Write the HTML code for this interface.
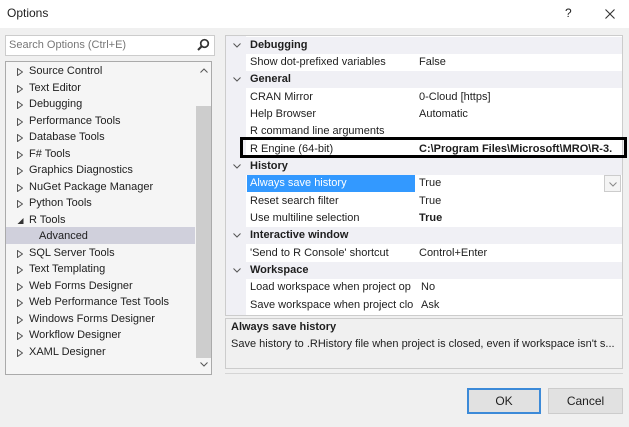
<!DOCTYPE html>
<html><head><style>
*{margin:0;padding:0;box-sizing:border-box}
body{width:629px;height:427px;background:#f0f0f0;font-family:"Liberation Sans",sans-serif;font-size:11px;color:#1e1e1e;position:relative;overflow:hidden}
.a{position:absolute;white-space:nowrap}
.title{left:0;top:0;width:629px;height:28px;background:#fff}
.tree div.i{position:absolute;left:11px;height:17px;line-height:17px}
.tri{display:inline-block;width:12px;height:17px;vertical-align:top;position:relative}
.tri svg{position:absolute;left:0;top:5px}
.row{position:absolute;left:0;width:397px;height:17px;line-height:17px}
.cat{background:#f0f0f5;font-weight:bold}
.row .n{position:absolute;left:24px}
.row .v{position:absolute;left:193px}
.chev{position:absolute;left:7px;top:6px}
</style></head><body>
<div class="a title"></div>
<div class="a" style="left:7px;top:6px;font-size:12px">Options</div>
<div class="a" style="left:565px;top:6px;font-size:12px">?</div>
<svg class="a" style="left:605px;top:9px" width="10" height="10"><path d="M0.5 0.5L9.5 9.5M9.5 0.5L0.5 9.5" stroke="#333" stroke-width="1.1"/></svg>

<div class="a" style="left:5px;top:35px;width:210px;height:21px;background:#fff;border:1px solid #ccc"></div>
<div class="a" style="left:9px;top:39px;color:#777">Search Options (Ctrl+E)</div>
<svg class="a" style="left:196px;top:38px" width="14" height="14"><circle cx="8.5" cy="5.5" r="3.8" fill="none" stroke="#333" stroke-width="1.7"/><line x1="6" y1="8" x2="2" y2="12" stroke="#333" stroke-width="2"/></svg>

<div class="a tree" style="left:5px;top:61px;width:207px;height:314px;border:1px solid #aaa;background:#f5f5f5">
<div class="a" style="left:190px;top:44px;width:15px;height:252px;background:#cdcdcd"></div>
<svg class="a" style="left:194px;top:6px" width="8" height="5"><path d="M0.5 4.5L4 1L7.5 4.5" fill="none" stroke="#555"/></svg>
<svg class="a" style="left:194px;top:300px" width="8" height="5"><path d="M0.5 0.5L4 4L7.5 0.5" fill="none" stroke="#555"/></svg>
<div class="a" style="left:0;top:165px;width:189px;height:17px;background:#d0d0dc"></div>
<div class="i" style="top:1px"><span class="tri"><svg width="6" height="8"><path d="M0.5 0.5L5.5 4L0.5 7.5Z" fill="none" stroke="#555"/></svg></span>Source Control</div>
<div class="i" style="top:17.5px"><span class="tri"><svg width="6" height="8"><path d="M0.5 0.5L5.5 4L0.5 7.5Z" fill="none" stroke="#555"/></svg></span>Text Editor</div>
<div class="i" style="top:34px"><span class="tri"><svg width="6" height="8"><path d="M0.5 0.5L5.5 4L0.5 7.5Z" fill="none" stroke="#555"/></svg></span>Debugging</div>
<div class="i" style="top:50.5px"><span class="tri"><svg width="6" height="8"><path d="M0.5 0.5L5.5 4L0.5 7.5Z" fill="none" stroke="#555"/></svg></span>Performance Tools</div>
<div class="i" style="top:67px"><span class="tri"><svg width="6" height="8"><path d="M0.5 0.5L5.5 4L0.5 7.5Z" fill="none" stroke="#555"/></svg></span>Database Tools</div>
<div class="i" style="top:83.5px"><span class="tri"><svg width="6" height="8"><path d="M0.5 0.5L5.5 4L0.5 7.5Z" fill="none" stroke="#555"/></svg></span>F# Tools</div>
<div class="i" style="top:100px"><span class="tri"><svg width="6" height="8"><path d="M0.5 0.5L5.5 4L0.5 7.5Z" fill="none" stroke="#555"/></svg></span>Graphics Diagnostics</div>
<div class="i" style="top:116.5px"><span class="tri"><svg width="6" height="8"><path d="M0.5 0.5L5.5 4L0.5 7.5Z" fill="none" stroke="#555"/></svg></span>NuGet Package Manager</div>
<div class="i" style="top:133px"><span class="tri"><svg width="6" height="8"><path d="M0.5 0.5L5.5 4L0.5 7.5Z" fill="none" stroke="#555"/></svg></span>Python Tools</div>
<div class="i" style="top:149.5px"><span class="tri"><svg width="7" height="8"><path d="M6.5 1L6.5 7L0.5 7Z" fill="#333"/></svg></span>R Tools</div>
<div class="i" style="top:166px;left:33px">Advanced</div>
<div class="i" style="top:182.5px"><span class="tri"><svg width="6" height="8"><path d="M0.5 0.5L5.5 4L0.5 7.5Z" fill="none" stroke="#555"/></svg></span>SQL Server Tools</div>
<div class="i" style="top:199px"><span class="tri"><svg width="6" height="8"><path d="M0.5 0.5L5.5 4L0.5 7.5Z" fill="none" stroke="#555"/></svg></span>Text Templating</div>
<div class="i" style="top:215.5px"><span class="tri"><svg width="6" height="8"><path d="M0.5 0.5L5.5 4L0.5 7.5Z" fill="none" stroke="#555"/></svg></span>Web Forms Designer</div>
<div class="i" style="top:232px"><span class="tri"><svg width="6" height="8"><path d="M0.5 0.5L5.5 4L0.5 7.5Z" fill="none" stroke="#555"/></svg></span>Web Performance Test Tools</div>
<div class="i" style="top:248.5px"><span class="tri"><svg width="6" height="8"><path d="M0.5 0.5L5.5 4L0.5 7.5Z" fill="none" stroke="#555"/></svg></span>Windows Forms Designer</div>
<div class="i" style="top:265px"><span class="tri"><svg width="6" height="8"><path d="M0.5 0.5L5.5 4L0.5 7.5Z" fill="none" stroke="#555"/></svg></span>Workflow Designer</div>
<div class="i" style="top:281.5px"><span class="tri"><svg width="6" height="8"><path d="M0.5 0.5L5.5 4L0.5 7.5Z" fill="none" stroke="#555"/></svg></span>XAML Designer</div>
</div>

<div class="a" style="left:225px;top:35px;width:398px;height:281px;background:#fff;border:1px solid #ccc;overflow:hidden">
<div class="a" style="left:0;top:0;width:20px;height:281px;background:#f0f0f5"></div>
<div class="row cat" style="top:1px"><svg class="chev" width="8" height="5"><path d="M0.5 0.5L4 4L7.5 0.5" fill="none" stroke="#555"/></svg><span class="n">Debugging</span></div>
<div class="row" style="top:18px"><span class="n">Show dot-prefixed variables</span><span class="v">False</span></div>
<div class="row cat" style="top:35px"><svg class="chev" width="8" height="5"><path d="M0.5 0.5L4 4L7.5 0.5" fill="none" stroke="#555"/></svg><span class="n">General</span></div>
<div class="row" style="top:52.5px"><span class="n">CRAN Mirror</span><span class="v">0-Cloud [https]</span></div>
<div class="row" style="top:70px"><span class="n">Help Browser</span><span class="v">Automatic</span></div>
<div class="row" style="top:87px"><span class="n">R command line arguments</span></div>
<div class="row" style="top:104.5px"><span class="n">R Engine (64-bit)</span><span class="v" style="font-weight:bold">C:\Program Files\Microsoft\MRO\R-3.</span></div>
<div class="row cat" style="top:122px"><svg class="chev" width="8" height="5"><path d="M0.5 0.5L4 4L7.5 0.5" fill="none" stroke="#555"/></svg><span class="n">History</span></div>
<div class="a" style="left:21px;top:139px;width:168px;height:17px;background:#3399ff"></div>
<div class="row" style="top:139px"><span class="n" style="color:#fff">Always save history</span><span class="v">True</span></div>
<div class="a" style="left:378px;top:139px;width:17px;height:17px;border:1px solid #ccc;background:#f4f4f4"><svg style="position:absolute;left:4px;top:6px" width="8" height="5"><path d="M0.5 0.5L4 4L7.5 0.5" fill="none" stroke="#888"/></svg></div>
<div class="row" style="top:156.5px"><span class="n">Reset search filter</span><span class="v">True</span></div>
<div class="row" style="top:174px"><span class="n">Use multiline selection</span><span class="v" style="font-weight:bold">True</span></div>
<div class="row cat" style="top:191px"><svg class="chev" width="8" height="5"><path d="M0.5 0.5L4 4L7.5 0.5" fill="none" stroke="#555"/></svg><span class="n">Interactive window</span></div>
<div class="row" style="top:208.5px"><span class="n">'Send to R Console' shortcut</span><span class="v">Control+Enter</span></div>
<div class="row cat" style="top:226px"><svg class="chev" width="8" height="5"><path d="M0.5 0.5L4 4L7.5 0.5" fill="none" stroke="#555"/></svg><span class="n">Workspace</span></div>
<div class="row" style="top:243px"><span class="n">Load workspace when project op</span><span class="v" style="background:#fff;padding-left:2px">No</span></div>
<div class="row" style="top:260.5px"><span class="n">Save workspace when project clo</span><span class="v" style="background:#fff;padding-left:2px">Ask</span></div>
</div>
<div class="a" style="left:240px;top:137px;width:387px;height:21px;border:3px solid #000"></div>

<div class="a" style="left:225px;top:318px;width:398px;height:51px;border:1px solid #ccc;background:#f0f0f0"></div>
<div class="a" style="left:231px;top:321px;font-weight:bold">Always save history</div>
<div class="a" style="left:231px;top:338px">Save history to .RHistory file when project is closed, even if workspace isn't s...</div>
<div class="a" style="left:225px;top:373px;width:398px;height:1px;background:#d5d5d5"></div>

<div class="a" style="left:467px;top:388px;width:74px;height:26px;border:2px solid #3c8ad8;background:#e1e1e1;text-align:center;line-height:22px;font-size:12px">OK</div>
<div class="a" style="left:548px;top:388px;width:75px;height:26px;border:1px solid #ccc;background:#e1e1e1;text-align:center;line-height:24px;font-size:12px">Cancel</div>
</body></html>
